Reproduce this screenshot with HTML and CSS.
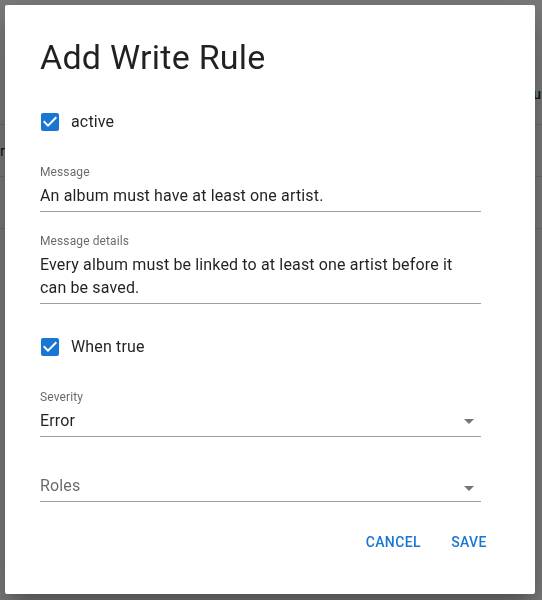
FILE: index.html
```html
<!DOCTYPE html>
<html lang="en">
<head>
<meta charset="utf-8">
<title>Add Write Rule</title>
<link rel="stylesheet" href="styles.css">
</head>
<body>
<div class="page">
  <div class="page-bar"><span class="page-menu">Menu</span></div>
  <div class="page-row"><span class="page-cell">rt</span></div>
  <div class="page-row"></div>
</div>
<div class="backdrop"></div>
<div class="dialog" role="dialog" aria-labelledby="dlg-title">
  <div class="dialog-body">
    <h2 class="dialog-title" id="dlg-title">Add Write Rule</h2>

    <label class="check-row check-row--first">
      <svg class="check-icon" viewBox="0 0 24 24" width="24" height="24" aria-hidden="true"><path d="M19 3H5c-1.11 0-2 .9-2 2v14c0 1.1.89 2 2 2h14c1.11 0 2-.9 2-2V5c0-1.1-.89-2-2-2zm-9 14l-5-5 1.41-1.41L10 14.170l7.59-7.59L19 8l-9 9z"/></svg>
      <span class="check-label">active</span>
    </label>

    <div class="field field--message">
      <div class="field-label">Message</div>
      <div class="field-input">An album must have at least one artist.</div>
    </div>

    <div class="field field--details">
      <div class="field-label">Message details</div>
      <div class="field-input">Every album must be linked to at least one artist before it<br>can be saved.</div>
    </div>

    <label class="check-row check-row--second">
      <svg class="check-icon" viewBox="0 0 24 24" width="24" height="24" aria-hidden="true"><path d="M19 3H5c-1.11 0-2 .9-2 2v14c0 1.1.89 2 2 2h14c1.11 0 2-.9 2-2V5c0-1.1-.89-2-2-2zm-9 14l-5-5 1.41-1.41L10 14.17l7.59-7.59L19 8l-9 9z"/></svg>
      <span class="check-label">When true</span>
    </label>

    <div class="field field--severity">
      <div class="field-label">Severity</div>
      <div class="field-input field-input--select">
        <span class="select-value">Error</span>
        <svg class="select-arrow" viewBox="0 0 24 24" width="24" height="24" aria-hidden="true"><path d="M7 10l5 5 5-5z"/></svg>
      </div>
    </div>

    <div class="field field--roles">
      <div class="field-label"></div>
      <div class="field-input field-input--select">
        <span class="select-value select-value--placeholder">Roles</span>
        <svg class="select-arrow select-arrow--low" viewBox="0 0 24 24" width="24" height="24" aria-hidden="true"><path d="M7 10l5 5 5-5z"/></svg>
      </div>
    </div>
  </div>

  <div class="dialog-actions">
    <button class="btn" type="button">Cancel</button>
    <button class="btn" type="button">Save</button>
  </div>
</div>
</body>
</html>
```

FILE: styles.css
```css
* { box-sizing: border-box; }

html, body {
  margin: 0;
  padding: 0;
}

body {
  font-family: Roboto, "Liberation Sans", Arial, sans-serif;
  background: #ffffff;
  overflow: hidden;
}

/* page behind the dialog */
.page {
  height: 600px;
  background: #ffffff;
  color: rgba(0, 0, 0, 0.87);
  font-size: 14px;
}

.page-bar {
  height: 125px;
  border-bottom: 1px solid #e0e0e0;
  display: flex;
  justify-content: flex-end;
  align-items: flex-start;
  padding-top: 84px;
  padding-right: 1px;
}

.page-menu {
  font-size: 15px;
  font-weight: 500;
  line-height: 20px;
}

.page-row {
  height: 52px;
  border-bottom: 1px solid #e0e0e0;
  display: flex;
  align-items: center;
  overflow: hidden;
}

.page-cell {
  margin-left: 0;
  font-size: 15px;
  line-height: 20px;
}

.backdrop {
  position: fixed;
  inset: 0;
  background: rgba(0, 0, 0, 0.52);
}

/* dialog */
.dialog {
  position: fixed;
  top: 5px;
  left: 5px;
  width: 530px;
  height: 589px;
  background: #ffffff;
  border-radius: 2px;
  box-shadow: 0 11px 15px -7px rgba(0,0,0,0.2), 0 24px 38px 3px rgba(0,0,0,0.14), 0 9px 46px 8px rgba(0,0,0,0.12);
  display: flex;
  flex-direction: column;
  padding: 31px 34px 0 35px;
}

.dialog-body {
  width: 441px;
  display: flex;
  flex-direction: column;
}

.dialog-title {
  margin: 0;
  font-size: 34px;
  line-height: 42px;
  font-weight: 400;
  letter-spacing: 0.25px;
  color: rgba(0, 0, 0, 0.87);
}

.check-row {
  display: flex;
  align-items: center;
  gap: 9px;
  height: 24px;
  margin-left: -2px;
  cursor: pointer;
}

.check-row--first { margin-top: 32px; }
.check-row--second { margin-top: 31px; }

.check-icon {
  display: block;
  flex: none;
  fill: #1976d2;
}

.check-label {
  font-size: 16px;
  line-height: 24px;
  letter-spacing: 0.15px;
  color: rgba(0, 0, 0, 0.87);
}

.field {
  display: flex;
  flex-direction: column;
}

.field--message { margin-top: 30px; }
.field--details { margin-top: 21px; }
.field--severity { margin-top: 30px; }
.field--roles { margin-top: 17px; }

.field-label {
  height: 16px;
  font-size: 12px;
  line-height: 16px;
  letter-spacing: 0.11px;
  color: rgba(0, 0, 0, 0.6);
}

.field-input {
  padding: 4px 0;
  border-bottom: 1px solid rgba(0, 0, 0, 0.38);
  font-size: 16px;
  line-height: 23px;
  letter-spacing: 0.15px;
  color: rgba(0, 0, 0, 0.87);
}

.field-input--select {
  display: flex;
  align-items: center;
}

.select-value {
  flex: 1;
}

.select-value--placeholder {
  color: rgba(0, 0, 0, 0.6);
}

.select-arrow {
  display: block;
  flex: none;
  fill: rgba(0, 0, 0, 0.54);
  margin: -1px 0;
}

.select-arrow--low {
  transform: translateY(2px);
}

.dialog-actions {
  display: flex;
  justify-content: flex-end;
  gap: 8px;
  margin-top: 22px;
}

.btn {
  min-width: 64px;
  padding: 6px 8px;
  border: 0;
  background: transparent;
  font-family: Roboto, "Liberation Sans", Arial, sans-serif;
  font-size: 14px;
  font-weight: 500;
  line-height: 24.5px;
  letter-spacing: 0.4px;
  text-transform: uppercase;
  color: #1976d2;
  border-radius: 4px;
  cursor: pointer;
}
```
